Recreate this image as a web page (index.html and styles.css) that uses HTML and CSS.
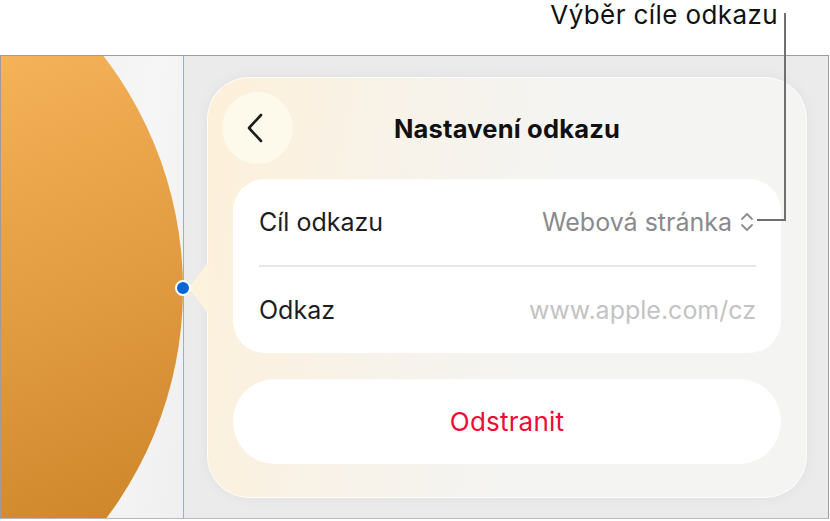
FILE: index.html
```html
<!DOCTYPE html>
<html lang="cs">
<head>
    <meta charset="UTF-8">
    <meta name="viewport" content="width=device-width, initial-scale=1.0">
    <title>Nastavení odkazu</title>
    <link rel="stylesheet" href="styles.css">
</head>
<body>
    <div class="callout">
        <span class="callout-text">Výběr cíle odkazu</span>
        <div class="callout-line"></div>
    </div>

    <div class="frame">
        <div class="canvas">
            <!-- orange shape on the slide -->
            <svg class="shape" width="182" height="462" viewBox="0 0 182 462">
                <defs>
                    <linearGradient id="orange" gradientUnits="userSpaceOnUse" x1="0" y1="0" x2="190" y2="470">
                        <stop offset="0" stop-color="#f6b259"/>
                        <stop offset="1" stop-color="#cc8428"/>
                    </linearGradient>
                </defs>
                <circle cx="-199" cy="233" r="381" fill="url(#orange)"/>
            </svg>
        </div>
        <div class="stage">
            <span class="anchor-dot"></span>
            <div class="panel">
                <span class="panel-tip"></span>
                <div class="panel-header">
                    <button class="back-btn">
                        <svg width="20" height="30" viewBox="0 0 20 30">
                            <path d="M15 2 L3 15 L15 28" fill="none" stroke="#1d1d1f" stroke-width="2.6" stroke-linecap="round" stroke-linejoin="round"/>
                        </svg>
                    </button>
                    <h2>Nastavení odkazu</h2>
                </div>

                <div class="group">
                    <div class="row">
                        <span class="label">Cíl odkazu</span>
                        <span class="value">Webová stránka
                            <svg width="14" height="22" viewBox="0 0 14 22">
                                <path d="M2 8 L7 3 L12 8 M2 14 L7 19 L12 14" fill="none" stroke="#8e8e92" stroke-width="1.8" stroke-linecap="round" stroke-linejoin="round"/>
                            </svg>
                        </span>
                    </div>
                    <div class="divider"></div>
                    <div class="row">
                        <span class="label">Odkaz</span>
                        <span class="value url">www.apple.com/cz</span>
                    </div>
                </div>

                <button class="remove-btn">Odstranit</button>
            </div>
        </div>
    </div>
</body>
</html>
```

FILE: styles.css
```css
*{
    box-sizing: border-box;
}
body{
    margin: 0;
    background-color: #fff;
    font-family: Inter, "Liberation Sans", sans-serif;
    color: #1d1d1f;
    width: 830px;
    height: 521px;
    overflow: hidden;
    position: relative;
}

/* annotation above the frame */
.callout{
    height: 55px;
    display: flex;
    justify-content: flex-end;
    padding-right: 52px;
}
.callout-text{
    font-size: 26px;
    line-height: 30px;
    letter-spacing: 0.4px;
    color: #111;
}
.callout-line{
    position: absolute;
    left: 757px;
    top: 13px;
    width: 29px;
    height: 208px;
    border-right: 2px solid #707070;
    border-bottom: 2px solid #707070;
    z-index: 5;
}

.frame{
    display: flex;
    width: 829px;
    height: 464px;
    border: 1px solid #9c9c9c;
    border-bottom-color: #b8b8b8;
    background-color: #ebebeb;
}
.canvas{
    width: 182px;
    height: 462px;
    background: linear-gradient(100deg, #ededed 0%, #f6f6f6 60%, #efefef 100%);
}
.shape{
    display: block;
}
.stage{
    flex: 1;
    position: relative;
    border-left: 1px solid #8aaeee;
    padding: 21px 21px 20px 23px;
    display: flex;
}
.anchor-dot{
    position: absolute;
    left: -9px;
    top: 224px;
    width: 16px;
    height: 16px;
    border-radius: 50%;
    background-color: #0a66d8;
    border: 2px solid #fff;
    z-index: 3;
}

.panel{
    flex: 1;
    position: relative;
    border-radius: 42px;
    background: linear-gradient(100deg, #fdf0d9 0%, #f8f2e8 28%, #f4f4f2 55%, #f4f4f3 100%);
    border: 1px solid rgba(255, 255, 255, 0.8);
    box-shadow: 0 0 14px rgba(0, 0, 0, 0.05);
    padding: 14px 25px 0 25px;
}
.panel-tip{
    position: absolute;
    left: -19px;
    top: 183px;
    width: 20px;
    height: 54px;
    background-color: #fdf2de;
    clip-path: polygon(100% 0, 0 50%, 100% 100%);
}
.panel-header{
    position: relative;
    height: 72px;
    display: flex;
    align-items: center;
    justify-content: center;
    margin-left: -11px;
    margin-right: -11px;
}
.panel-header h2{
    margin: 0;
    font-size: 25.5px;
    font-weight: 700;
    letter-spacing: 0.2px;
    color: #111;
}
.back-btn{
    position: absolute;
    left: 0;
    top: 0;
    width: 71px;
    height: 72px;
    border-radius: 50%;
    border: none;
    background-color: #fdf9eb;
    display: flex;
    align-items: center;
    justify-content: center;
    padding: 0 4px 0 0;
}

.group{
    margin-top: 15px;
    background-color: #fff;
    border-radius: 32px;
    padding: 0 25px 0 26px;
}
.row{
    height: 86px;
    display: flex;
    align-items: center;
    justify-content: space-between;
    font-size: 25px;
}
.divider{
    height: 2px;
    background-color: #e6e6e6;
}
.value{
    color: #8a8a8e;
    display: flex;
    align-items: center;
    gap: 8px;
    margin-right: 2px;
}
.value.url{
    color: #c3c3c5;
    margin-right: 0;
}

.remove-btn{
    margin-top: 26px;
    width: 100%;
    height: 85px;
    border: none;
    border-radius: 42px;
    background-color: #fff;
    color: #ee0a35;
    font-family: inherit;
    font-size: 26px;
    letter-spacing: 0.2px;
}
```
